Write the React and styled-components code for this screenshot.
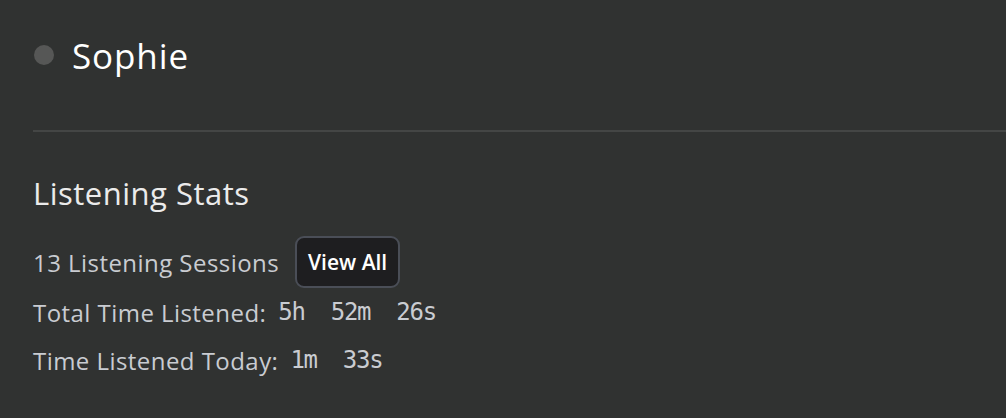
import React from "react";
import styled, { createGlobalStyle } from "styled-components";

const Global = createGlobalStyle`
  html, body { margin: 0; padding: 0; background: #303231; overflow: hidden; }
  body { font-family: "Open Sans", "Noto Sans", sans-serif; }
`;

const Page = styled.div`
  width: 1006px;
  height: 418px;
  box-sizing: border-box;
  padding: 28px 0 0 33px;
  background: #303231;
`;

const Header = styled.div`
  display: flex;
  align-items: center;
  gap: 18px;
  height: 54px;
  padding-left: 1px;
`;

const Dot = styled.span`
  width: 20px;
  height: 20px;
  border-radius: 50%;
  background: #565756;
`;

const Name = styled.h1`
  margin: 0;
  font-size: 35px;
  font-weight: 500;
  letter-spacing: 0.9px;
  color: #ffffff;
`;

const Divider = styled.hr`
  margin: 48px 0 0 0;
  border: none;
  height: 2px;
  background: #444645;
`;

const Title = styled.h2`
  margin: 42px 0 0 0;
  font-size: 31px;
  font-weight: 400;
  letter-spacing: 0.5px;
  color: #ebebeb;
  line-height: 38px;
`;

const Stats = styled.div`
  display: flex;
  flex-direction: column;
  margin-top: 24px;
`;

const Row = styled.div`
  display: flex;
  align-items: center;
  height: ${(p) => p.$h || 48}px;
  font-size: 24px;
  letter-spacing: 0.45px;
  color: #c9ccd1;
`;

const Mono = styled.span`
  font-family: "DejaVu Sans Mono", monospace;
  font-size: 24px;
  letter-spacing: -1.3px;
  margin-left: 12px;
  word-spacing: 13px;
`;

const Button = styled.button`
  margin-left: 16px;
  width: 105px;
  height: 52px;
  border-radius: 9px;
  border: 2px solid #4a4e57;
  background: #1e1e20;
  color: #fff;
  font-family: "Open Sans", "Noto Sans", sans-serif;
  font-size: 21px;
  font-weight: 600;
  cursor: pointer;
`;

export default function App() {
  return (
    <Page>
      <Global />
      <Header>
        <Dot />
        <Name>Sophie</Name>
      </Header>
      <Divider />
      <Title>Listening Stats</Title>
      <Stats>
        <Row $h={52}>
          13 Listening Sessions
          <Button>View All</Button>
        </Row>
        <Row>
          Total Time Listened:<Mono>5h 52m 26s</Mono>
        </Row>
        <Row>
          Time Listened Today:<Mono>1m 33s</Mono>
        </Row>
      </Stats>
    </Page>
  );
}
